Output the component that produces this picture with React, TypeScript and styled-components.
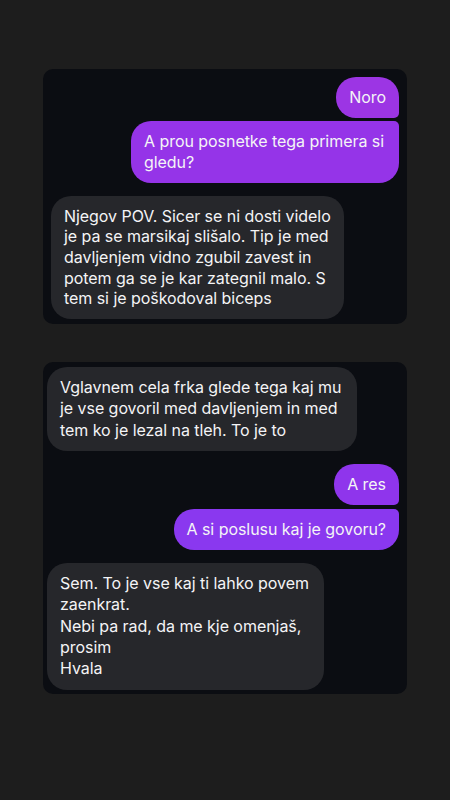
import React from "react";
import styled, { createGlobalStyle, css } from "styled-components";

type Side = "me" | "them";
type Pos = "single" | "first" | "last";

interface Message {
  text: string;
  pos?: Pos;
  width?: number;
  tint?: string;
}

interface Group {
  side: Side;
  messages: Message[];
}

const GlobalStyle = createGlobalStyle`
  html, body {
    margin: 0;
    padding: 0;
    background: #1d1d1d;
  }
  body {
    font-family: Inter, "Noto Sans", "Liberation Sans", sans-serif;
    -webkit-font-smoothing: antialiased;
  }
`;

const Page = styled.div`
  width: 450px;
  height: 800px;
  box-sizing: border-box;
  padding: 69px 43px 0 43px;
  display: flex;
  flex-direction: column;
  gap: 38px;
`;

const Panel = styled.section<{ $pad: string; $line: number }>`
  background: #0b0d12;
  border-radius: 10px;
  padding: ${({ $pad }) => $pad};
  display: flex;
  flex-direction: column;
  gap: 13px;
  font-size: 16px;
  line-height: ${({ $line }) => $line}px;
`;

const GroupRow = styled.div<{ $side: Side }>`
  display: flex;
  flex-direction: column;
  align-items: ${({ $side }) => ($side === "me" ? "flex-end" : "flex-start")};
  gap: 3.5px;
`;

const Bubble = styled.div<{ $side: Side; $pos: Pos; $width?: number; $tint?: string }>`
  box-sizing: border-box;
  padding: 10px 13px;
  color: #f4f4f6;
  white-space: pre;
  letter-spacing: -0.05px;
  border-radius: 20px;
  background: ${({ $side, $tint }) =>
    $side === "me" ? $tint || "#9133ea" : "#26272b"};
  ${({ $width }) =>
    $width &&
    css`
      width: ${$width}px;
    `}
  ${({ $side, $pos }) =>
    $side === "me" &&
    $pos === "first" &&
    css`
      border-bottom-right-radius: 5px;
    `}
  ${({ $side, $pos }) =>
    $side === "me" &&
    $pos === "last" &&
    css`
      border-top-right-radius: 5px;
    `}
`;

const firstChat: Group[] = [
  {
    side: "me",
    messages: [
      { text: "Noro", pos: "first", tint: "#9c35e4" },
      {
        text: "A prou posnetke tega primera si\ngledu?",
        pos: "last",
        width: 268,
        tint: "#9534e8",
      },
    ],
  },
  {
    side: "them",
    messages: [
      {
        text:
          "Njegov POV. Sicer se ni dosti videlo\nje pa se marsikaj slišalo. Tip je med\ndavljenjem vidno zgubil zavest in\npotem ga se je kar zategnil malo. S\ntem si je poškodoval biceps",
        width: 293,
      },
    ],
  },
];

const secondChat: Group[] = [
  {
    side: "them",
    messages: [
      {
        text:
          "Vglavnem cela frka glede tega kaj mu\nje vse govoril med davljenjem in med\ntem ko je lezal na tleh. To je to",
        width: 310,
      },
    ],
  },
  {
    side: "me",
    messages: [
      { text: "A res", pos: "first", tint: "#8f35ec" },
      { text: "A si poslusu kaj je govoru?", pos: "last", tint: "#8a38ef" },
    ],
  },
  {
    side: "them",
    messages: [
      {
        text:
          "Sem. To je vse kaj ti lahko povem\nzaenkrat.\nNebi pa rad, da me kje omenjaš,\nprosim\nHvala",
        width: 277,
      },
    ],
  },
];

const Chat = ({ groups }: { groups: Group[] }) => (
  <>
    {groups.map((group, gi) => (
      <GroupRow key={gi} $side={group.side}>
        {group.messages.map((m, mi) => (
          <Bubble
            key={mi}
            $side={group.side}
            $pos={m.pos || "single"}
            $width={m.width}
            $tint={m.tint}
          >
            {m.text}
          </Bubble>
        ))}
      </GroupRow>
    ))}
  </>
);

export default function App() {
  return (
    <>
      <GlobalStyle />
      <Page>
        <Panel $pad="8px 8px 5px 8px" $line={20.7}>
          <Chat groups={firstChat} />
        </Panel>
        <Panel $pad="5px 8px 4px 4px" $line={21.3}>
          <Chat groups={secondChat} />
        </Panel>
      </Page>
    </>
  );
}
